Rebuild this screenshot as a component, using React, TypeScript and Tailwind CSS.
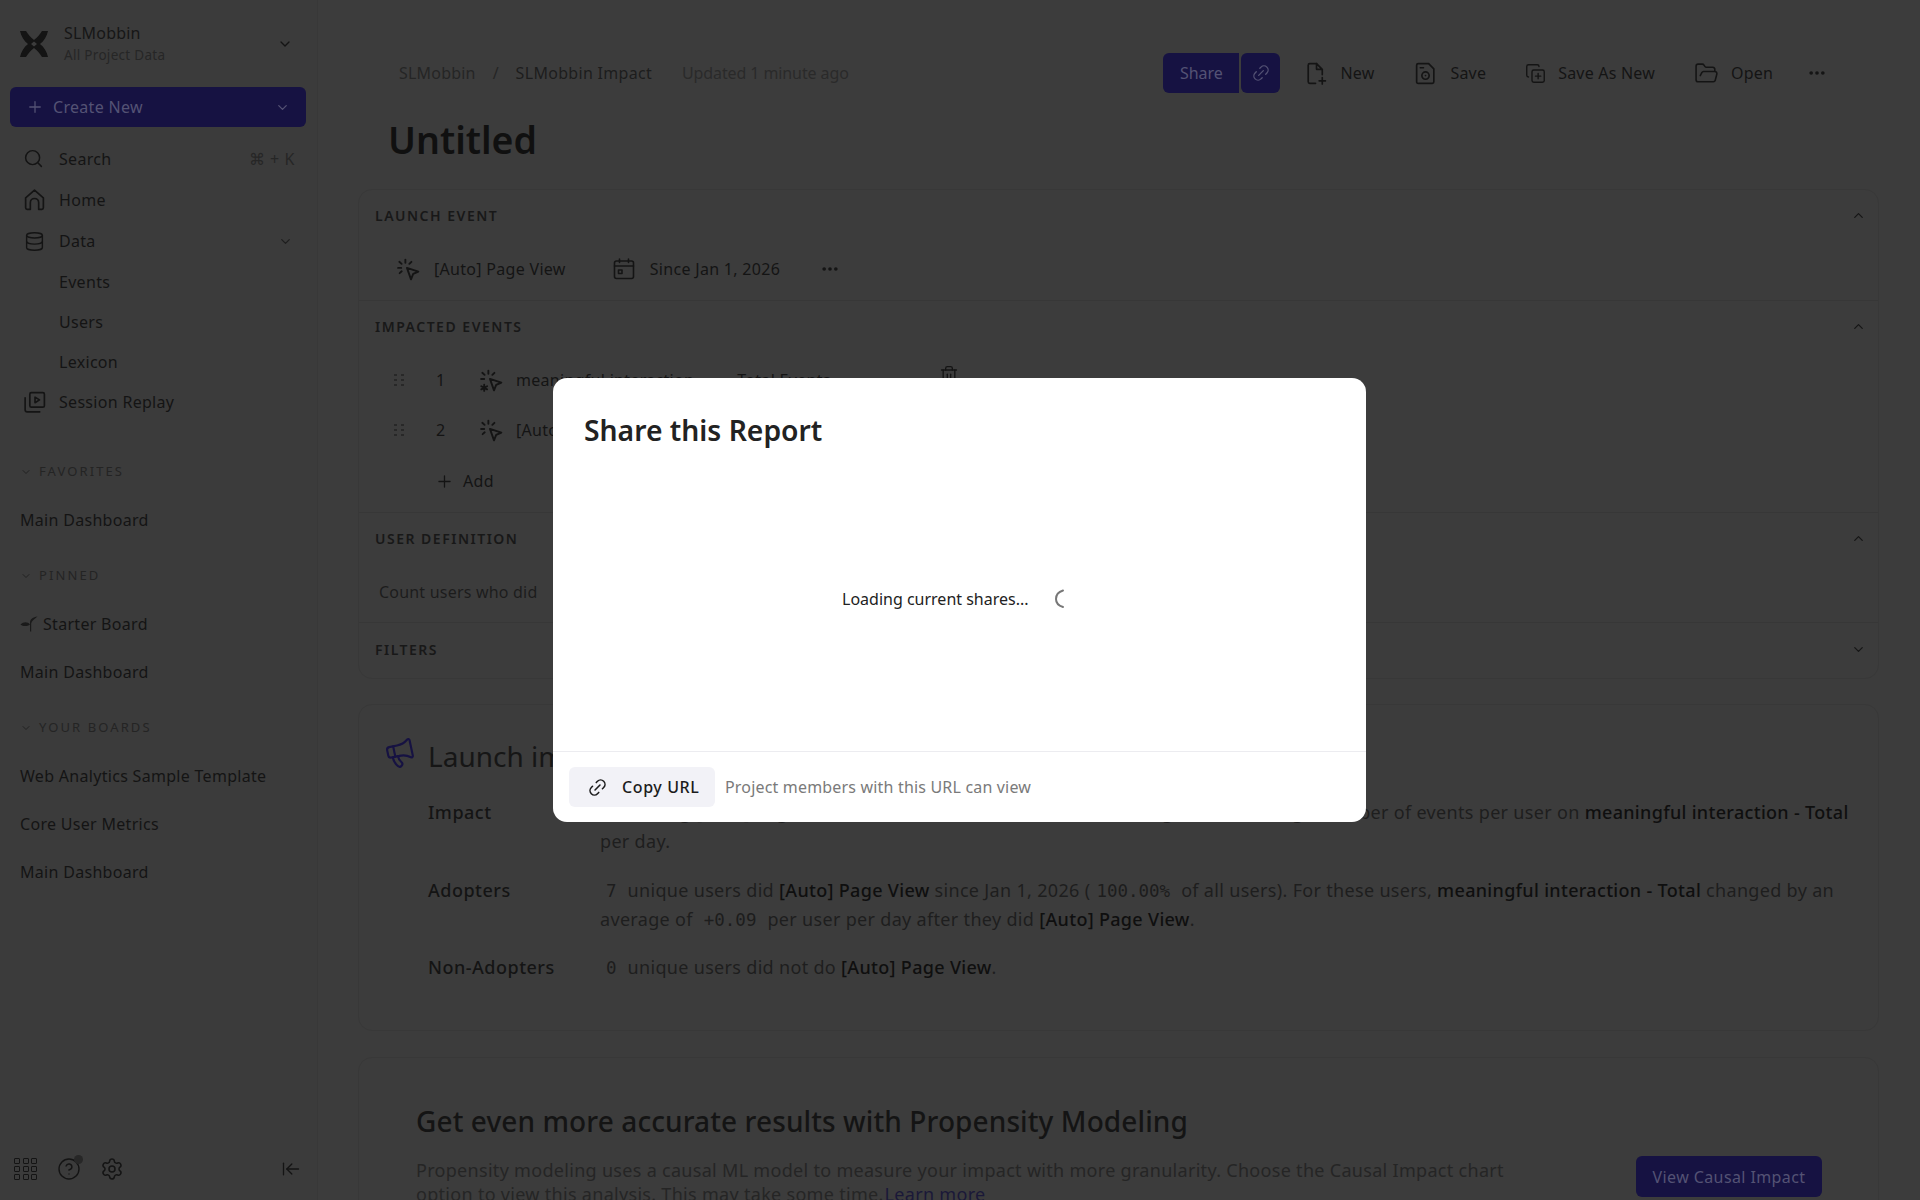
import React from "react";
import { Search, Database, ChevronDown, ChevronUp, Plus, Link2, Ellipsis, Settings, FolderOpen, CopyPlus, ArrowLeftToLine, CircleHelp, Trash2, Megaphone } from "lucide-react";

const font = { fontFamily: '"Noto Sans", "Liberation Sans", sans-serif' };

function Svg({ size = 24, sw = 1.6, children, className = "" }: { size?: number; sw?: number; children: React.ReactNode; className?: string }) {
  return (
    <svg width={size} height={size} viewBox="0 0 24 24" fill="none" stroke="currentColor" strokeWidth={sw} strokeLinecap="round" strokeLinejoin="round" className={`shrink-0 ${className}`}>
      {children}
    </svg>
  );
}

function ClickIcon({ star = false }: { star?: boolean }) {
  return (
    <Svg size={25} sw={1.8}>
      <path d="M10.500 10.500 L21.500 14 L16.500 16.200 L14.400 21.500 Z" />
      <path d="M9 2.500v3M3.200 4.600l2.200 2M2 10.500h3M14.800 4.600l-2 2" />
      {star ? <path d="M5 16v6M2.200 17.500l5.600 3M7.800 17.500l-5.600 3" /> : <path d="M3.500 15.500l2-1.800" />}
    </Svg>
  );
}

const HomeIcon = () => (
  <Svg size={25}><path d="M3.500 10.500 12 3l8.500 7.500V20a1.500 1.500 0 0 1-1.500 1.500h-3V15a4 4 0 0 0-8 0v6.500H5A1.500 1.500 0 0 1 3.500 20z" /></Svg>
);
const ReplayIcon = () => (
  <Svg size={25}>
    <rect x="7.500" y="2.500" width="14" height="14" rx="1.500" />
    <path d="M12.500 6.800v5.400l4.300-2.700z" />
    <path d="M3 7.500V19a2 2 0 0 0 2 2h12" />
  </Svg>
);
const NewIcon = () => (
  <Svg size={25}>
    <path d="M13 2.500H6.500A1.500 1.500 0 0 0 5 4v16a1.500 1.500 0 0 0 1.500 1.500H12" />
    <path d="M13 2.500V8h5.500M13 2.500 18.500 8v5" />
    <path d="M18.500 16v6M15.500 19h6" />
  </Svg>
);
const SaveIcon = () => (
  <Svg size={25}>
    <path d="M5 2.500h10l5 5V20a1.500 1.500 0 0 1-1.500 1.500h-13A1.500 1.500 0 0 1 3.500 20V4A1.500 1.500 0 0 1 5 2.500z" />
    <circle cx="12" cy="14" r="3.500" />
    <path d="M7 6.500h3M12 14h.01" />
  </Svg>
);
const CalendarIcon = () => (
  <Svg size={24}>
    <rect x="2.500" y="4" width="19" height="17.500" rx="2" />
    <path d="M2.500 9h19M7.500 2v3.500M16.500 2v3.500" />
    <rect x="6.500" y="13" width="3.500" height="3.500" />
  </Svg>
);
const SproutIcon = () => (
  <svg width="18" height="16" viewBox="0 0 18 16" className="shrink-0 mr-[5px]" fill="#1a1a1a">
    <path d="M10 15.500h1.200V7.500C11.500 5 14 3.500 17.500.5 13 1 10 3 10 7z" />
    <path d="M10 8.500C8 6 4 5 .5 8.500 3 10.500 7 10.800 10 8.500z" />
  </svg>
);

function Logo() {
  return (
    <svg width="28" height="26" viewBox="0 0 28 26" fill="#141414" className="shrink-0">
      <path d="M0 0h6c2 3 4 6 8 9 4-3 6-6 8-9h6c-1 5-4 10-8 13 4 3 7 8 8 13h-6c-2-3-4-6-8-9-4 3-6 6-8 9H0c1-5 4-10 8-13C4 10 1 5 0 0z" />
      <path d="M11 13l3-2.600 3 2.600-3 2.600z" fill="#3c3c3c" />
    </svg>
  );
}

function NavRow({ h, icon, children, right }: { h: string; icon?: React.ReactNode; children: React.ReactNode; right?: React.ReactNode }) {
  return (
    <div className={`flex items-center pl-[22px] pr-[20px] ${h}`}>
      <span className="w-[37px] shrink-0 flex items-center text-[#141414]">{icon}</span>
      <span className="text-[16px] tracking-[0.3px] text-[#141414] flex-1">{children}</span>
      {right}
    </div>
  );
}

function GroupHead({ label, className }: { label: string; className: string }) {
  return (
    <div className={`flex items-center h-6 pl-[20px] gap-[7px] ${className}`}>
      <ChevronDown size={12} strokeWidth={2} className="text-[#222]" />
      <span className="text-[13px] tracking-[2.1px] text-[#242424]">{label}</span>
    </div>
  );
}

function BoardRow({ children }: { children: React.ReactNode }) {
  return <div className="h-12 flex items-center pl-[20px] text-[16px] tracking-[0.3px] text-[#141414]">{children}</div>;
}

function Sidebar() {
  return (
    <aside className="w-[318px] shrink-0 h-[1200px] bg-[#3b3b3b] border-r border-[#383838] flex flex-col">
      <div className="h-[87px] flex items-center pl-[20px] pr-[24px]">
        <Logo />
        <div className="ml-[16px] flex-1">
          <div className="text-[16px] leading-[22px] tracking-[0.2px] text-[#161616]">SLMobbin</div>
          <div className="text-[13.5px] leading-[22px] tracking-[0.3px] text-[#262626]">All Project Data</div>
        </div>
        <ChevronDown size={16} strokeWidth={2} className="text-[#141414]" />
      </div>
      <div className="mx-[10px] h-[40px] w-[296px] rounded-[6px] bg-[#161242] flex items-center pl-[16px] pr-[16px]">
        <Plus size={18} strokeWidth={1.7} className="text-[#545274]" />
        <span className="ml-[9px] flex-1 text-[16px] tracking-[0.3px] text-[#545274]">Create New</span>
        <ChevronDown size={15} strokeWidth={2} className="text-[#545274]" />
      </div>
      <div className="mt-[11px]">
        <NavRow h="h-[41px]" icon={<Search size={21} strokeWidth={1.7} className="ml-[1px]" />} right={<span className="text-[16px] tracking-[0.6px] mr-[2px] text-[#262626]">⌘ + K</span>}>Search</NavRow>
        <NavRow h="h-[41px]" icon={<HomeIcon />}>Home</NavRow>
        <NavRow h="h-[42px]" icon={<Database size={21} strokeWidth={1.6} className="ml-[2px]" />} right={<ChevronDown size={15} strokeWidth={2} className="text-[#1e1e1e] mr-[4px]" />}>Data</NavRow>
        <NavRow h="h-[40px]">Events</NavRow>
        <NavRow h="h-[40px]">Users</NavRow>
        <NavRow h="h-[40px]">Lexicon</NavRow>
        <NavRow h="h-[40px]" icon={<ReplayIcon />}>Session Replay</NavRow>
      </div>
      <GroupHead label="FAVORITES" className="mt-[38px]" />
      <div className="mt-[12px]"><BoardRow>Main Dashboard</BoardRow></div>
      <GroupHead label="PINNED" className="mt-[20px]" />
      <div className="mt-[12px]">
        <BoardRow><SproutIcon />Starter Board</BoardRow>
        <BoardRow>Main Dashboard</BoardRow>
      </div>
      <GroupHead label="YOUR BOARDS" className="mt-[20px]" />
      <div className="mt-[12px]">
        <BoardRow>Web Analytics Sample Template</BoardRow>
        <BoardRow>Core User Metrics</BoardRow>
        <BoardRow>Main Dashboard</BoardRow>
      </div>
      <div className="mt-auto mb-[19px] flex items-center pl-[14px] pr-[16px] text-[#141414]">
        <div className="grid grid-cols-3 gap-x-[2px] gap-y-[2px] w-[24px]">
          {Array.from({ length: 9 }).map((_, i) => (
            <span key={i} className="w-[6px] h-[6px] border border-[#141414] rounded-[1px]" />
          ))}
        </div>
        <span className="relative ml-[19px]">
          <CircleHelp size={24} strokeWidth={1.4} />
          <span className="absolute -top-[2px] -right-[2px] w-[9px] h-[9px] rounded-full bg-[#272727]" />
        </span>
        <Settings size={24} strokeWidth={1.5} className="ml-[19px]" />
        <ArrowLeftToLine size={20} strokeWidth={1.6} className="ml-auto" />
      </div>
    </aside>
  );
}

function Action({ icon, label }: { icon: React.ReactNode; label: string }) {
  return (
    <div className="flex items-center gap-[12px] text-[#141414]">
      {icon}
      <span className="text-[16px] tracking-[0.2px]">{label}</span>
    </div>
  );
}

function TopBar() {
  return (
    <div className="h-[40px] flex items-center pl-[41px] pr-[52px]">
      <span className="text-[16px] tracking-[0.2px] text-[#252525]">SLMobbin</span>
      <span className="ml-[17px] text-[16px] text-[#252525]">/</span>
      <span className="ml-[17px] text-[16px] tracking-[0.3px] text-[#1d1d1d]">SLMobbin Impact</span>
      <span className="ml-[30px] text-[16px] tracking-[-0.1px] text-[#2a2a2a]">Updated 1 minute ago</span>
      <div className="ml-auto flex items-center">
        <div className="w-[76px] h-[40px] bg-[#161242] rounded-l-[6px] flex items-center justify-center text-[16px] text-[#545274]">Share</div>
        <div className="ml-[2px] w-[39px] h-[40px] bg-[#161242] rounded-[6px] flex items-center justify-center text-[#545274]"><Link2 size={20} strokeWidth={1.6} className="-rotate-45" /></div>
        <div className="ml-[23px] flex items-center gap-[39px]">
          <Action icon={<NewIcon />} label="New" />
          <Action icon={<SaveIcon />} label="Save" />
          <Action icon={<CopyPlus size={21} strokeWidth={1.6} />} label="Save As New" />
          <Action icon={<FolderOpen size={25} strokeWidth={1.5} />} label="Open" />
        </div>
        <Ellipsis size={20} strokeWidth={2.4} className="ml-[34px] text-[#141414]" />
      </div>
    </div>
  );
}

function SectionTitle({ label, down }: { label: string; down?: boolean }) {
  return (
    <div className="flex items-center justify-between h-[24px] pl-[16px] pr-[12px]">
      <span className="text-[14px] font-semibold tracking-[1.5px] text-[#181818]">{label}</span>
      {down ? <ChevronDown size={15} strokeWidth={2} className="text-[#161616]" /> : <ChevronUp size={15} strokeWidth={2} className="text-[#161616]" />}
    </div>
  );
}

function Grip() {
  return (
    <span className="w-[10px] grid grid-cols-2 gap-x-[3px] gap-y-[3px]">
      {Array.from({ length: 6 }).map((_, i) => <span key={i} className="w-[3px] h-[2px] bg-[#282828]" />)}
    </span>
  );
}

function QueryCard() {
  return (
    <div className="mt-[26px] h-[490px] rounded-[14px] border border-[#383838] flex flex-col text-[#141414]">
      <div className="h-[111px] border-b border-[#373737] pt-[13px]">
        <SectionTitle label="LAUNCH EVENT" />
        <div className="mt-[30px] flex items-center pl-[37px] h-[24px] text-[16px] tracking-[0.3px]">
          <ClickIcon />
          <span className="ml-[13px]">[Auto] Page View</span>
          <span className="ml-[46px]"><CalendarIcon /></span>
          <span className="ml-[14px]">Since Jan 1, 2026</span>
          <Ellipsis size={20} strokeWidth={2.4} className="ml-[40px]" />
        </div>
      </div>
      <div className="h-[212px] border-b border-[#373737] pt-[13px]">
        <SectionTitle label="IMPACTED EVENTS" />
        <div className="mt-[30px] h-[24px] flex items-center pl-[35px] text-[16px] tracking-[0.3px]">
          <Grip />
          <span className="ml-[32px] w-[14px]">1</span>
          <span className="ml-[29px]"><ClickIcon star /></span>
          <span className="ml-[12px]">meaningful interaction</span>
          <span className="ml-[43px]">Total Events</span>
          <Trash2 size={20} strokeWidth={1.6} className="ml-[108px] -mt-[10px]" />
        </div>
        <div className="mt-[26px] h-[24px] flex items-center pl-[35px] text-[16px] tracking-[0.3px]">
          <Grip />
          <span className="ml-[32px] w-[14px]">2</span>
          <span className="ml-[29px]"><ClickIcon /></span>
          <span className="ml-[12px]">[Auto] Page View</span>
        </div>
        <div className="mt-[27px] h-[24px] flex items-center pl-[76px] text-[16px] tracking-[0.3px]">
          <Plus size={19} strokeWidth={1.6} />
          <span className="ml-[9px]">Add</span>
        </div>
      </div>
      <div className="h-[110px] border-b border-[#373737] pt-[13px]">
        <SectionTitle label="USER DEFINITION" />
        <div className="mt-[30px] pl-[20px] text-[16px] tracking-[0.2px] text-[#1c1c1c] leading-[24px]">Count users who did</div>
      </div>
      <div className="pt-[14px]">
        <SectionTitle label="FILTERS" down />
      </div>
    </div>
  );
}

function Code({ children }: { children: React.ReactNode }) {
  return <code className="mx-[6px] text-[17.5px] leading-none tracking-normal text-[#1d1d1d]" style={{ fontFamily: '"DejaVu Sans Mono", monospace' }}>{children}</code>;
}

function B({ children }: { children: React.ReactNode }) {
  return <span className="font-medium text-[#0f0f0f]">{children}</span>;
}

function ResultRow({ label, children, className }: { label: string; children: React.ReactNode; className: string }) {
  return (
    <div className={`flex text-[18px] leading-[29px] tracking-[0.32px] ${className}`}>
      <div className="w-[172px] shrink-0 text-[#141414] font-medium tracking-[0.5px]">{label}</div>
      <div className="flex-1 text-[#1e1e1e] whitespace-nowrap">{children}</div>
    </div>
  );
}

function ResultCard() {
  return (
    <div className="mt-[25px] h-[327px] rounded-[14px] border border-[#383838] pl-[69px] pr-[24px] pt-[31px] relative">
      <Megaphone size={32} strokeWidth={1.6} className="absolute left-[25px] top-[32px] text-[#161242] -rotate-12" />
      <div className="text-[28px] leading-[40px] text-[#161616]">Launch impact</div>
      <ResultRow label="Impact" className="mt-[22px]">
        Launching [Auto] Page View caused an estimated <Code>+0.09</Code><span className="inline-block w-[15px]" /> change in the average number of events per user on <B>meaningful interaction - Total</B><br />per day.
      </ResultRow>
      <ResultRow label="Adopters" className="mt-[20px]">
        <Code>7</Code> unique users did <B>[Auto] Page View</B> since Jan 1, 2026 (<Code>100.00%</Code> of all users). For these users, <B>meaningful interaction - Total</B> changed by an<br />average of <Code>+0.09</Code> per user per day after they did <B>[Auto] Page View</B>.
      </ResultRow>
      <ResultRow label="Non-Adopters" className="mt-[19px]">
        <Code>0</Code> unique users did not do <B>[Auto] Page View</B>.
      </ResultRow>
    </div>
  );
}

function PromoCard() {
  return (
    <div className="mt-[26px] h-[200px] rounded-t-[14px] border border-[#383838] pl-[57px] pr-[56px] pt-[43px]">
      <div className="text-[28px] leading-[40px] tracking-[0.1px] font-medium text-[#141414]">Get even more accurate results with Propensity Modeling</div>
      <div className="flex items-start justify-between mt-[17px]">
        <div className="w-[1150px] text-[18px] leading-[24px] tracking-[0.3px] text-[#252525]">
          Propensity modeling uses a causal ML model to measure your impact with more granularity. Choose the Causal Impact chart<br />option to view this analysis. This may take some time. <span className="-ml-[4px] text-[#1a1838] underline">Learn more</span>
        </div>
        <div className="w-[186px] h-[41px] -mt-[2px] rounded-[6px] bg-[#161242] flex items-center justify-center text-[16px] tracking-[0.4px] text-[#545274]">View Causal Impact</div>
      </div>
    </div>
  );
}

function ShareDialog() {
  return (
    <div className="absolute left-[553px] top-[378px] w-[813px] h-[444px] bg-white rounded-[14px] flex flex-col">
      <div className="pl-[31px] pt-[30px] text-[28.300px] leading-[44px] font-semibold text-[#222]">Share this Report</div>
      <div className="flex-1 flex items-center pl-[289px] pb-[6px]">
        <span className="text-[16px] text-[#222]">Loading current shares...</span>
        <svg width="16" height="20" viewBox="0 0 16 20" fill="none" stroke="#777" strokeWidth="2" strokeLinecap="round" className="ml-[25px]">
          <path d="M9 1.500C4 3 2 6.500 2 10c0 3.500 2 6.500 7 8" />
        </svg>
      </div>
      <div className="h-[71px] border-t border-[#ececf0] flex items-center pl-[16px]">
        <div className="w-[146px] h-[40px] rounded-[6px] bg-[#f2f2f7] flex items-center pl-[18px] text-[#1c1c1c]">
          <Link2 size={21} strokeWidth={1.8} className="-rotate-45" />
          <span className="ml-[14px] text-[16px] font-medium tracking-[0.6px]">Copy URL</span>
        </div>
        <span className="ml-[10px] text-[16px] tracking-[0.18px] text-[#7a7a7a]">Project members with this URL can view</span>
      </div>
    </div>
  );
}

export default function App() {
  return (
    <div className="relative w-[1920px] h-[1200px] overflow-hidden bg-[#3c3c3c] flex" style={font}>
      <Sidebar />
      <main className="flex-1 min-w-0 h-[1200px] pl-[40px] pr-[41px] pt-[53px]">
        <TopBar />
        <div className="pl-[30px] mt-[23px] h-[47px] text-[37.500px] leading-[47px] font-semibold text-[#101010]">Untitled</div>
        <QueryCard />
        <ResultCard />
        <PromoCard />
      </main>
      <ShareDialog />
    </div>
  );
}
